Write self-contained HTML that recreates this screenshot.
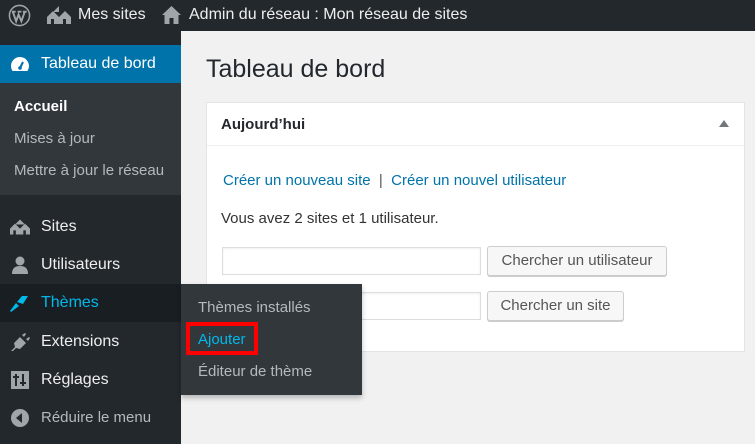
<!DOCTYPE html>
<html><head><meta charset="utf-8"><style>
*{box-sizing:border-box;margin:0;padding:0}
body{width:755px;height:444px;overflow:hidden;background:#f1f1f1;font-family:"Liberation Sans",Arial,sans-serif;position:relative}
.top{position:absolute;left:0;top:0;width:755px;height:31px;background:#23282d;color:#eee;font-size:16px}
.top span{position:absolute;top:6px}
.side{position:absolute;left:0;top:31px;width:181px;height:413px;background:#23282d}
.item{position:absolute;left:0;width:181px;height:38px;color:#eee;font-size:16px;line-height:38px;padding-left:41px}
.ic{position:absolute;left:10px;top:10px;width:20px;height:18px}
.sub{position:absolute;left:14px;font-size:15px;color:#b4b9be}
.fly{position:absolute;left:181px;top:284px;width:181px;height:111px;background:#32373c;box-shadow:0 3px 5px rgba(0,0,0,.25)}
.fly div{position:absolute;left:17px;font-size:15px;color:#b4b9be}
.panel{position:absolute;left:206px;top:102px;width:539px;height:250px;background:#fff;border:1px solid #e2e4e7}
.inp{position:absolute;height:28px;border:1px solid #ddd;background:#fff;box-shadow:inset 0 1px 2px rgba(0,0,0,.07)}
.btn{position:absolute;height:30px;border:1px solid #ccc;background:#f7f7f7;border-radius:3px;box-shadow:0 1px 0 #ccc;font-size:15px;color:#555;line-height:28px;text-align:center}
</style></head><body>
<div class="top">
<svg style="position:absolute;left:8px;top:4px" width="23" height="23" viewBox="0 0 24 24"><circle cx="12" cy="12" r="10.5" fill="none" stroke="#a0a5aa" stroke-width="1.6"/><path d="M5 8l3.5 10 2.5-7 3 7 3.5-10M4 8h4M10 8h4M15.5 8h4" stroke="#a0a5aa" stroke-width="2" fill="none"/></svg>
<svg style="position:absolute;left:47px;top:6px" width="24" height="18" viewBox="0 0 24 18"><path d="M12 0l6 6-6 0zM12 0L6 6h12zM0 11l6-6 6 6 6-6 6 6v7H0z" fill="#a0a5aa"/><rect x="4" y="13" width="3" height="5" fill="#23282d"/><rect x="16" y="13" width="3" height="5" fill="#23282d"/></svg>
<span style="left:78px">Mes sites</span>
<svg style="position:absolute;left:162px;top:6px" width="19" height="18" viewBox="0 0 19 18"><path d="M9.5 0L0 9h2.5v9h5v-6h4v6h5V9H19z" fill="#a0a5aa"/></svg>
<span style="left:189px">Admin du réseau : Mon réseau de sites</span>
</div>
<div class="side">
<div class="item" style="top:14px;background:#0073aa;color:#fff">
<svg class="ic" viewBox="0 0 20 18"><path d="M10 2a9 9 0 0 0-9 9c0 2 .6 3.6 1.6 5h14.8A9 9 0 0 0 10 2z" fill="#fff"/><path d="M10 13l3-6" stroke="#0073aa" stroke-width="2"/><circle cx="10" cy="13" r="1.8" fill="#0073aa"/></svg>Tableau de bord</div>
<div style="position:absolute;left:173px;top:26px;border:8px solid transparent;border-right-color:#f1f1f1"></div>
<div style="position:absolute;left:0;top:52px;width:181px;height:112px;background:#32373c"></div>
<div class="sub" style="top:67px;color:#fff;font-weight:bold">Accueil</div>
<div class="sub" style="top:99px">Mises à jour</div>
<div class="sub" style="top:131px">Mettre à jour le réseau</div>
<div class="item" style="top:177px"><svg class="ic" viewBox="0 0 24 18"><path d="M12 0L6 6h12zM0 11l6-6 6 6 6-6 6 6v7H0z" fill="#a0a5aa"/><rect x="4" y="13" width="3" height="5" fill="#23282d"/><rect x="16" y="13" width="3" height="5" fill="#23282d"/></svg>Sites</div>
<div class="item" style="top:215px"><svg class="ic" viewBox="0 0 20 18"><circle cx="10" cy="5" r="4.5" fill="#a0a5aa"/><path d="M2 18c0-6 3-8 8-8s8 2 8 8z" fill="#a0a5aa"/></svg>Utilisateurs</div>
<div class="item" style="top:253px;background:#191e23;color:#00b9eb"><svg class="ic" viewBox="0 0 20 18"><path d="M0 17l6-8 3 3-8 6zM7 8l5-6 6 0-5 8z" fill="#00b9eb"/></svg>Thèmes</div>
<div style="position:absolute;left:173px;top:265px;border:8px solid transparent;border-right-color:#32373c"></div>
<div class="item" style="top:292px"><svg class="ic" viewBox="0 0 20 18"><path d="M1 18l4-4-1-4 6-6 6 6-6 6-4-1-4 4zM12 2l3-2 1 1-2 3zM16 6l3-2 1 1-2 3z" fill="#a0a5aa"/></svg>Extensions</div>
<div class="item" style="top:330px"><svg class="ic" viewBox="0 0 20 18"><rect x="1" y="0" width="18" height="18" fill="#a0a5aa"/><path d="M6 3v12M13 3v12M3 6h6M10 12h6" stroke="#23282d" stroke-width="2"/></svg>Réglages</div>
<div class="item" style="top:368px;color:#b4b9be;font-size:15px"><svg class="ic" viewBox="0 0 20 18"><circle cx="10" cy="9" r="9" fill="#a0a5aa"/><path d="M12 4v10l-6-5z" fill="#23282d"/></svg>Réduire le menu</div>
</div>
<div style="position:absolute;left:206px;top:55px;font-size:25px;color:#23282d">Tableau de bord</div>
<div class="panel">
<div style="position:absolute;left:0;top:0;width:537px;height:43px;border-bottom:1px solid #eee"></div>
<div style="position:absolute;left:14px;top:13px;font-size:15px;font-weight:bold;color:#23282d">Aujourd’hui</div>
<div style="position:absolute;right:15px;top:17px;border:5px solid transparent;border-bottom:7px solid #72777c;border-top:0"></div>
<div style="position:absolute;left:16px;top:69px;font-size:15px;color:#0073aa">Créer un nouveau site <span style="color:#555">&nbsp;|&nbsp;</span> Créer un nouvel utilisateur</div>
<div style="position:absolute;left:14px;top:107px;font-size:15px;color:#333">Vous avez 2 sites et 1 utilisateur.</div>
</div>
<div class="inp" style="left:222px;top:247px;width:259px"></div>
<div class="btn" style="left:487px;top:246px;width:180px">Chercher un utilisateur</div>
<div class="inp" style="left:222px;top:292px;width:259px"></div>
<div class="btn" style="left:487px;top:291px;width:137px">Chercher un site</div>
<div class="fly">
<div style="top:15px">Thèmes installés</div>
<div style="top:47px;color:#00b9eb">Ajouter</div>
<div style="top:79px">Éditeur de thème</div>
</div>
<div style="position:absolute;left:186px;top:322px;width:72px;height:33px;border:4px solid #f00"></div>
</body></html>
